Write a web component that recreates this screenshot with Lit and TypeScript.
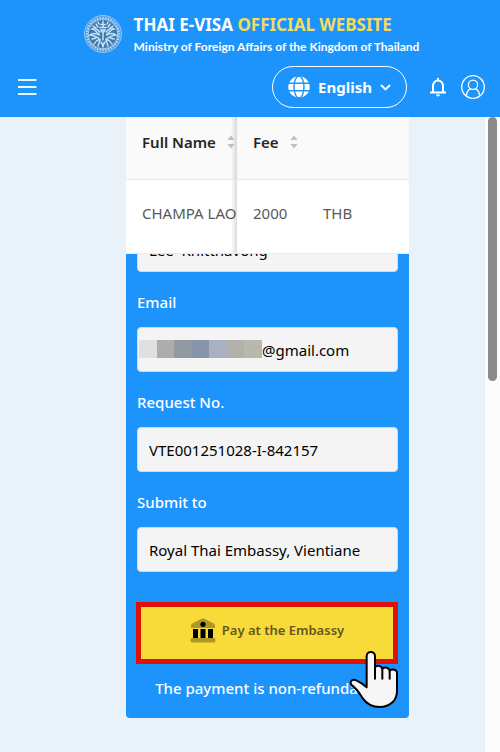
import { LitElement, html, css, svg } from "lit";
import { customElement } from "lit/decorators.js";

const sorter = html`<svg class="sorter" viewBox="0 0 8 14" aria-hidden="true">
  <path d="M4 0.5 7.6 5H0.4Z M4 13.5 7.6 9H0.4Z" fill="#bfbfbf" />
</svg>`;

const spokes = Array.from({ length: 36 }, (_, i) => i * 10);

@customElement("site-header")
export class SiteHeader extends LitElement {
  static styles = css`
    :host {
      display: block;
      box-sizing: border-box;
      height: 117px;
      padding: 14px 15px 0 18px;
      background: #1c94fc;
      color: #fff;
    }
    .brand {
      display: flex;
      justify-content: center;
      align-items: center;
      gap: 12px;
      height: 40px;
    }
    .emblem {
      width: 38px;
      height: 38px;
    }
    .names {
      padding-top: 4px;
    }
    .title {
      margin: 0;
      font-size: 17px;
      line-height: 22px;
      font-weight: 700;
      white-space: nowrap;
    }
    .accent {
      color: #f3dc5a;
    }
    .subtitle {
      margin: 0;
      font-family: Lato, "Noto Sans", sans-serif;
      font-size: 12px;
      line-height: 22px;
      font-weight: 700;
      white-space: nowrap;
    }
    .bar {
      display: flex;
      align-items: center;
      height: 42px;
      margin-top: 12px;
    }
    button {
      font: inherit;
      color: inherit;
      background: none;
      border: 0;
      padding: 0;
      display: flex;
      align-items: center;
    }
    .menu {
      margin-right: auto;
    }
    .menu svg {
      width: 19px;
      height: 18px;
    }
    .language {
      box-sizing: border-box;
      height: 42px;
      width: 135px;
      justify-content: center;
      gap: 8px;
      border: 1px solid #fff;
      border-radius: 21px;
      font-size: 15px;
      font-weight: 700;
    }
    .globe {
      width: 22px;
      height: 22px;
    }
    .chevron {
      width: 11px;
      height: 7px;
    }
    .bell {
      margin-left: 22px;
    }
    .bell svg {
      width: 18px;
      height: 20px;
    }
    .user {
      margin-left: 14px;
    }
    .user svg {
      width: 24px;
      height: 24px;
    }
  `;

  render() {
    return html`
      <div class="brand">
        <svg class="emblem" viewBox="0 0 38 38" aria-hidden="true">
          <circle cx="19" cy="19" r="18.5" fill="#5a9fdc" stroke="#8cc6f8" />
          ${spokes.map(
            (a) => svg`<path d="M19 2V4.2" stroke="#c4e0f6" stroke-width="1.2" transform="rotate(${a} 19 19)" />`
          )}
          <circle cx="19" cy="19" r="14.8" fill="#3a7ab2" stroke="#b9d9f2" stroke-width="0.8" />
          <g fill="none" stroke="#cfe4f4" stroke-width="1.4" stroke-linecap="round">
            <path d="M19 6v6M16.8 9.5h4.4M15.8 12.5h6.4M17 15h4l-2 3zM19 18v7" />
            <path d="M16 17c-4-4-6-5-8-3 3 0 4 3 7 5M22 17c4-4 6-5 8-3-3 0-4 3-7 5" />
            <path d="M15.5 20c-4-2-7-2-9.5 0 3-.3 5 1.5 8.5 3M22.5 20c4-2 7-2 9.5 0-3-.3-5 1.5-8.5 3" />
            <path d="M16 24c-3 1-5 3-6 5M22 24c3 1 5 3 6 5M16 25l-2 6M22 25l2 6M17 27l2 4 2-4M12 9l2 3M26 9l-2 3" />
            <path d="M9 11l3 2M29 11l-3 2M8 24l4-1M30 24l-4-1M19 28v4M14 7l1 2M24 7l-1 2" />
          </g>
        </svg>
        <div class="names">
          <h1 class="title">THAI E-VISA <span class="accent">OFFICIAL WEBSITE</span></h1>
          <p class="subtitle">Ministry of Foreign Affairs of the Kingdom of Thailand</p>
        </div>
      </div>
      <nav class="bar">
        <button class="menu" aria-label="Menu">
          <svg viewBox="0 0 19 18"><path d="M0 2h18.5M0 9h18.5M0 16h18.5" stroke="#dffcff" stroke-width="2" /></svg>
        </button>
        <button class="language">
          <svg class="globe" viewBox="0 0 22 22" aria-hidden="true">
            <circle cx="11" cy="11" r="10.7" fill="#fff" />
            <g fill="none" stroke="#1c94fc" stroke-width="1.4">
              <ellipse cx="11" cy="11" rx="5" ry="11" />
              <path d="M0 7.3h22M0 14.7h22" />
            </g>
          </svg>
          English
          <svg class="chevron" viewBox="0 0 11 7" aria-hidden="true">
            <path d="M1 1 5.5 5.5 10 1" fill="none" stroke="#fff" stroke-width="1.9" />
          </svg>
        </button>
        <button class="bell" aria-label="Notifications">
          <svg viewBox="0 0 18 20">
            <path d="M9 1v2M4 15V9a5 5.5 0 0 1 10 0v6" fill="none" stroke="#fff" stroke-width="2" />
            <path d="M1 14.5h16v2H1zM7 17.5h4a2 2 0 0 1-4 0z" fill="#fff" />
          </svg>
        </button>
        <button class="user" aria-label="Account">
          <svg viewBox="0 0 24 24" fill="none" stroke="#fff" stroke-width="1.3">
            <circle cx="12" cy="12" r="11.3" />
            <circle cx="12" cy="9.8" r="4.6" />
            <path d="M5.5 20.5c.3-3.8 2.2-6 4.3-6.8M18.5 20.5c-.3-3.8-2.2-6-4.3-6.8" />
          </svg>
        </button>
      </nav>
    `;
  }
}

@customElement("fee-table")
export class FeeTable extends LitElement {
  static styles = css`
    :host {
      display: block;
      background: #fff;
    }
    table {
      width: 100%;
      table-layout: fixed;
      border-collapse: separate;
      border-spacing: 0;
      font-size: 15px;
      line-height: 22px;
    }
    .name-col {
      width: 111px;
    }
    .fee-col {
      width: 70px;
    }
    th,
    td {
      box-sizing: border-box;
      padding: 0 0 0 16px;
      text-align: left;
      white-space: nowrap;
      border-bottom: 1px solid #e8e8e8;
    }
    th {
      height: 63px;
      padding-bottom: 12px;
      background-color: #fafafa;
      color: #262626;
      font-weight: 600;
    }
    td {
      height: 74px;
      padding-bottom: 8px;
      color: #595959;
    }
    .name {
      overflow: hidden;
      background-image: linear-gradient(to left, rgba(0, 0, 0, 0.14), rgba(0, 0, 0, 0) 6px);
    }
    .head {
      display: flex;
      align-items: center;
      gap: 11px;
    }
    .sorter {
      flex: none;
      width: 8px;
      height: 14px;
    }
  `;

  render() {
    return html`
      <table>
        <colgroup>
          <col class="name-col" />
          <col class="fee-col" />
          <col />
        </colgroup>
        <thead>
          <tr>
            <th class="name"><div class="head">Full Name ${sorter}</div></th>
            <th colspan="2"><div class="head">Fee ${sorter}</div></th>
          </tr>
        </thead>
        <tbody>
          <tr>
            <td class="name">CHAMPA LAOI</td>
            <td>2000</td>
            <td>THB</td>
          </tr>
        </tbody>
      </table>
    `;
  }
}

@customElement("payment-form")
export class PaymentForm extends LitElement {
  static styles = css`
    :host {
      display: block;
      padding: 0 11px 18px;
      background: #1c94fc;
      border-radius: 0 0 4px 4px;
      color: #fff;
    }
    form {
      display: flex;
      flex-direction: column;
    }
    .scrolled {
      display: flex;
      align-items: flex-end;
      height: 18px;
      overflow: hidden;
    }
    label {
      margin-top: 18px;
      font-size: 15px;
      line-height: 24px;
      font-weight: 500;
    }
    .field {
      position: relative;
      margin-top: 13px;
    }
    input {
      display: block;
      flex: none;
      box-sizing: border-box;
      width: 100%;
      height: 45px;
      padding: 0 11px;
      border: 1px solid #d9d9d9;
      border-radius: 4px;
      background: #f4f4f4;
      color: #000;
      font: inherit;
      font-size: 15px;
    }
    .masked {
      padding-left: 124px;
    }
    .mosaic {
      position: absolute;
      left: 2px;
      top: 13px;
      display: flex;
      width: 123px;
      height: 18px;
    }
    .mosaic i {
      flex: 1;
    }
    .m1 { background: #e0e0e0; }
    .m2 { background: #adadad; }
    .m3 { background: #9299a2; }
    .m4 { background: #8795ab; }
    .m5 { background: #a7b1c0; }
    .m6 { background: #b2b2aa; }
    .m7 { background: #b9b8ad; }
    .action {
      position: relative;
      margin: 30px 0 0 -1px;
    }
    .pay {
      box-sizing: border-box;
      display: flex;
      align-items: center;
      justify-content: center;
      gap: 6px;
      width: 100%;
      height: 62px;
      padding: 0 0 6px;
      border: 5px solid #dd1205;
      background: #f8da38;
      color: #64591b;
      font: inherit;
      font-size: 13px;
      font-weight: 600;
    }
    .bank {
      width: 26px;
      height: 26px;
    }
    .hand {
      position: absolute;
      right: 0;
      top: 48px;
      width: 49px;
      height: 59px;
    }
    .note {
      margin: 12px 0 0;
      font-size: 15px;
      line-height: 24px;
      font-weight: 500;
      text-align: center;
    }
  `;

  render() {
    return html`
      <form>
        <div class="scrolled"><input aria-label="Full Name" .value=${"Lee  Khitthavong"} /></div>
        <label for="email">Email</label>
        <div class="field">
          <input id="email" class="masked" .value=${"@gmail.com"} />
          <span class="mosaic" aria-hidden="true">
            <i class="m1"></i><i class="m2"></i><i class="m3"></i><i class="m4"></i><i class="m5"></i><i class="m6"></i><i class="m7"></i>
          </span>
        </div>
        <label for="request">Request No.</label>
        <div class="field"><input id="request" .value=${"VTE001251028-I-842157"} /></div>
        <label for="submit-to">Submit to</label>
        <div class="field"><input id="submit-to" .value=${"Royal Thai Embassy, Vientiane"} /></div>
        <div class="action">
          <button class="pay" type="button">
            <svg class="bank" viewBox="0 0 26 26" aria-hidden="true">
              <path d="M1 11V8.5Q1 7 2.7 6.2L11.5 1.7Q13 1 14.5 1.7L23.3 6.2Q25 7 25 8.5V11Z" fill="#ad9727" />
              <rect x="0.5" y="21" width="25" height="4.5" rx="1.8" fill="#ad9727" />
              <path d="M3 12h5v9H3zM10.5 12h5v9h-5zM18 12h5v9h-5z" fill="#000" />
              <circle cx="13" cy="7.3" r="2.6" fill="#000" />
            </svg>
            Pay at the Embassy
          </button>
          <svg class="hand" viewBox="27 30 147 177" aria-hidden="true">
            <g fill="#f6f6f6" stroke="#000" stroke-width="6" stroke-linejoin="round" stroke-linecap="round">
              <path
                d="M80 142V48C80 32 105 32 105 48V81C113 75 125 77 127 86C135 80 147 83 149 92C157 86 171 89 171 99V152C171 182 150 201 119 201C97 201 81 193 69 176C59 161 53 149 37 137C26 127 35 115 49 121C62 127 70 133 80 142Z"
              />
              <path d="M105 81V116M127 86V116M149 92V116" />
            </g>
          </svg>
        </div>
        <p class="note">The payment is non-refundable</p>
      </form>
    `;
  }
}

@customElement("app-root")
export class AppRoot extends LitElement {
  static styles = css`
    :host {
      display: flex;
      flex-direction: column;
      min-height: 100vh;
      font-family: "Noto Sans", "Liberation Sans", sans-serif;
      background: #e9f1f9;
    }
    .body {
      flex: 1;
      display: flex;
    }
    main {
      flex: 1;
      min-width: 0;
      padding: 0 76px 34px 126px;
    }
    .track {
      box-sizing: border-box;
      width: 15px;
      padding: 0 3px;
      background: #fcfcfc;
    }
    .thumb {
      height: 264px;
      border-radius: 5px;
      background: #8b8b8b;
    }
  `;

  render() {
    return html`
      <site-header></site-header>
      <div class="body">
        <main>
          <fee-table></fee-table>
          <payment-form></payment-form>
        </main>
        <div class="track"><div class="thumb"></div></div>
      </div>
    `;
  }
}
